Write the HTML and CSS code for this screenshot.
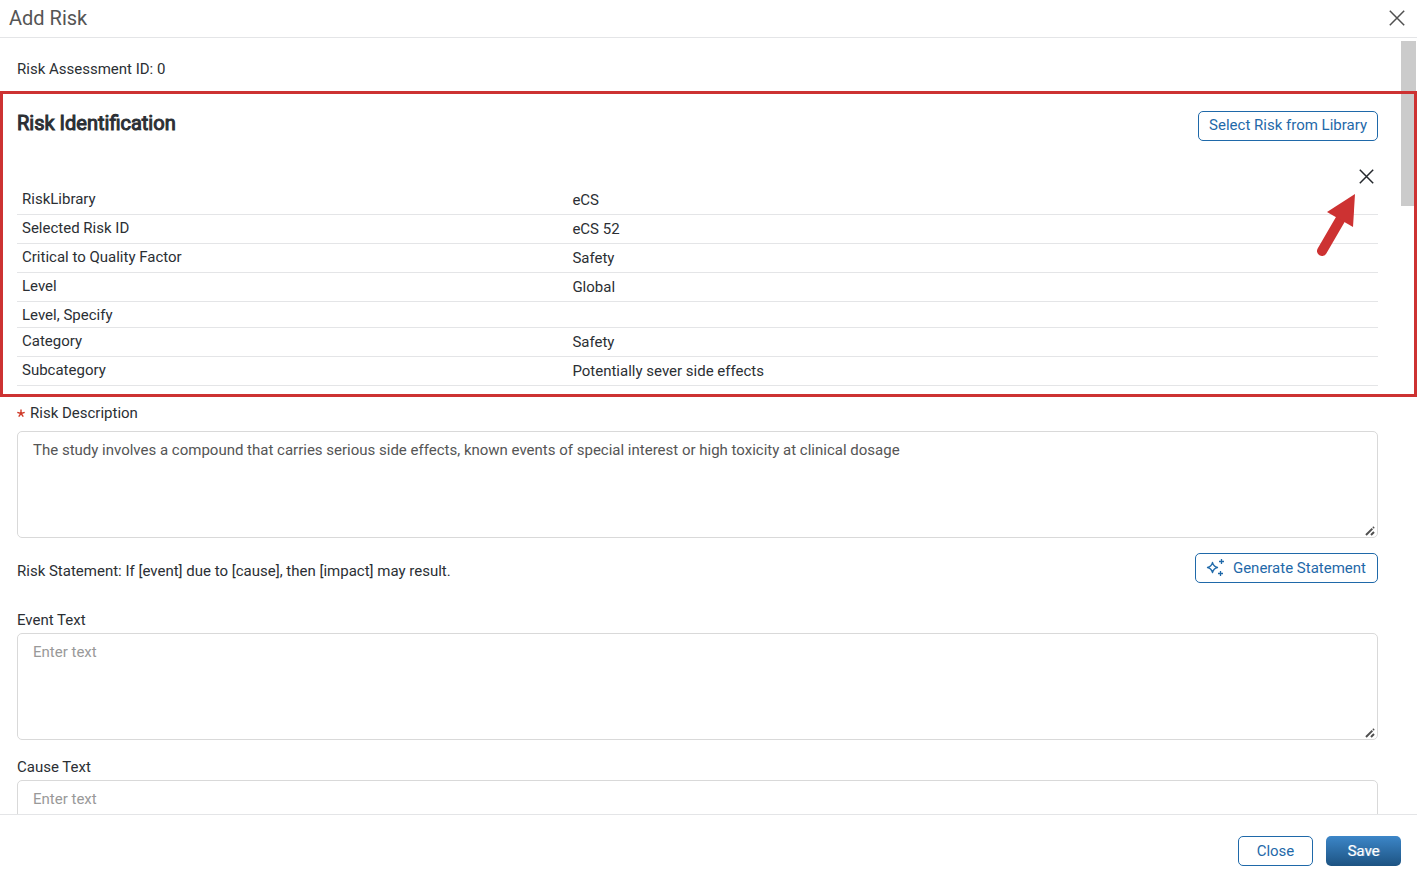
FILE: index.html
```html
<!DOCTYPE html>
<html lang="en">
<head>
<meta charset="utf-8">
<title>Add Risk</title>
<link rel="stylesheet" href="styles.css">
</head>
<body>
<div class="dialog" role="dialog" aria-labelledby="dialog-title">
  <header class="dialog-header">
    <h1 class="dialog-title" id="dialog-title">Add Risk</h1>
    <button class="icon-button" type="button" aria-label="Close dialog">
      <svg width="16" height="16" viewBox="0 0 16 16"><path d="M.8.8 15.2 15.2M15.2.8.8 15.2"/></svg>
    </button>
  </header>

  <div class="dialog-body">
    <main class="content">
      <p class="assessment-id">Risk Assessment ID: 0</p>

      <section class="identification">
        <div class="section-head">
          <h2 class="section-title">Risk Identification</h2>
          <button class="button button-library" type="button">Select Risk from Library</button>
        </div>
        <div class="clear-row">
          <button class="icon-button icon-button-dark" type="button" aria-label="Clear selected risk">
            <svg width="15" height="15" viewBox="0 0 15 15"><path d="M.8.8 14.2 14.2M14.2.8.8 14.2"/></svg>
          </button>
        </div>
        <table class="details">
          <tbody>
            <tr><th scope="row">RiskLibrary</th><td>eCS</td></tr>
            <tr><th scope="row">Selected Risk ID</th><td>eCS 52</td></tr>
            <tr><th scope="row">Critical to Quality Factor</th><td>Safety</td></tr>
            <tr><th scope="row">Level</th><td>Global</td></tr>
            <tr><th scope="row">Level, Specify</th><td class="empty"></td></tr>
            <tr><th scope="row">Category</th><td>Safety</td></tr>
            <tr><th scope="row">Subcategory</th><td>Potentially sever side effects</td></tr>
          </tbody>
        </table>
      </section>

      <div class="field field-description">
        <label class="label" for="description"><svg class="required" width="8" height="9" viewBox="0 0 8 9" role="img" aria-label="required"><path d="M4 4.500V.5M4 4.500.3 3.300M4 4.500 7.700 3.300M4 4.500 1.700 7.700M4 4.500 6.300 7.700"/></svg>Risk Description</label>
        <textarea class="textarea" id="description">The study involves a compound that carries serious side effects, known events of special interest or high toxicity at clinical dosage</textarea>
      </div>

      <div class="statement">
        <p class="statement-text">Risk Statement: If [event] due to [cause], then [impact] may result.</p>
        <button class="button" type="button">
          <svg class="sparkle" width="18" height="18" viewBox="0 0 18 18"><path d="M6.500 3.500Q7.500 7.500 11.500 8.500Q7.500 9.500 6.500 13.500Q5.500 9.500 1.500 8.500Q5.500 7.500 6.500 3.500ZM15.500 0v5M13 2.500h5M14.500 12v5M12 14.500h5"/></svg>
          Generate Statement
        </button>
      </div>

      <div class="field">
        <label class="label" for="event">Event Text</label>
        <textarea class="textarea" id="event" placeholder="Enter text"></textarea>
      </div>
      <div class="field">
        <label class="label" for="cause">Cause Text</label>
        <textarea class="textarea" id="cause" placeholder="Enter text"></textarea>
      </div>
    </main>
    <div class="scroll-track" aria-hidden="true"><div class="scroll-thumb"></div></div>

    <div class="highlight" aria-hidden="true"></div>
    <svg class="arrow" width="42" height="66" viewBox="0 0 42 66" aria-hidden="true">
      <path class="arrow-shaft" d="M8 59 26 28"/>
      <path class="arrow-head" d="M41 2 39 35 13 20Z"/>
    </svg>
  </div>

  <footer class="dialog-footer">
    <button class="button button-wide" type="button">Close</button>
    <button class="button button-wide button-primary" type="button">Save</button>
  </footer>
</div>
</body>
</html>
```
FILE: styles.css
```css
* {
  box-sizing: border-box;
}

body {
  margin: 0;
  background: #fff;
  color: #2b2f34;
  font: 15px/20px Roboto, "Liberation Sans", sans-serif;
}

h1, h2, p {
  margin: 0;
}

.dialog {
  display: flex;
  flex-direction: column;
  height: 100vh;
}

.dialog-header {
  display: flex;
  justify-content: space-between;
  align-items: center;
  padding: 6px 12px 7px 9px;
  border-bottom: 1px solid #e4e5e7;
}

.dialog-title {
  color: #555;
  font-size: 20px;
  font-weight: 400;
  line-height: 24px;
}

.icon-button {
  display: flex;
  padding: 0;
  border: 0;
  background: none;
  color: #505050;
  cursor: pointer;
}

.icon-button-dark {
  color: #24282d;
}

.icon-button path {
  fill: none;
  stroke: currentColor;
  stroke-width: 1.5;
}

.dialog-body {
  position: relative;
  display: flex;
  flex: 1;
  min-height: 0;
  overflow: hidden;
}

.content {
  flex: 1;
  padding: 21px 23px 0 17px;
}

.scroll-track {
  width: 16px;
  padding: 3px 1px 0 0;
}

.scroll-thumb {
  height: 165px;
  background: #cbcbcb;
}

.section-head {
  display: flex;
  justify-content: space-between;
  align-items: flex-start;
  margin-top: 32px;
}

.section-title {
  font-size: 20px;
  font-weight: 400;
  line-height: 24px;
  -webkit-text-stroke: 1px currentColor;
}

.button {
  display: flex;
  align-items: center;
  justify-content: center;
  gap: 9px;
  padding: 4px 11px 4px 10px;
  border: 1px solid #1f69a9;
  border-radius: 5px;
  background: #fff;
  color: #1f69a9;
  font: inherit;
  cursor: pointer;
}

.button-library {
  padding: 3px 10px 5px;
}

.sparkle {
  fill: none;
  stroke: currentColor;
  stroke-width: 1.3;
  stroke-linejoin: round;
}

.clear-row {
  display: flex;
  justify-content: flex-end;
  padding: 28px 4px 2px;
}

.details {
  width: 100%;
  border-collapse: separate;
  border-spacing: 0;
  table-layout: fixed;
}

.details th,
.details td {
  border-bottom: 1px solid #e4e5e7;
  text-align: left;
  vertical-align: top;
}

.details th {
  width: 40%;
  padding: 3px 5px 2px;
  font-weight: 400;
}

.details td {
  padding: 4px 11px;
}

.details .empty {
  padding: 0;
}

.field {
  display: flex;
  flex-direction: column;
  gap: 3px;
  margin-bottom: 17px;
}

.field-description {
  gap: 8px;
  margin: 17px 0 15px;
}

.required {
  margin-right: 5px;
  fill: none;
  stroke: #cf3a28;
  stroke-width: 1.4;
}

.textarea {
  display: block;
  width: 100%;
  height: 107px;
  padding: 8px 15px;
  border: 1px solid #d9d9d9;
  border-radius: 5px;
  background: #fff;
  color: #555;
  font: inherit;
  resize: vertical;
}

.textarea::placeholder {
  color: #999;
}

.textarea::-webkit-resizer {
  background: url("data:image/svg+xml,%3Csvg xmlns='http://www.w3.org/2000/svg' width='15' height='15'%3E%3Cpath d='M4 13l8-8M9 13l3-3' stroke='%23505050' stroke-width='2' stroke-dasharray='9 1'/%3E%3C/svg%3E") right bottom no-repeat;
}

.statement {
  display: flex;
  align-items: center;
  justify-content: space-between;
  margin-bottom: 27px;
}

.statement-text {
  padding-top: 5px;
}

.highlight {
  position: absolute;
  top: 53px;
  left: 0;
  right: 0;
  height: 306px;
  border: 3px solid #cd3232;
}

.arrow {
  position: absolute;
  top: 154px;
  right: 61px;
}

.arrow-shaft {
  stroke: #cd3232;
  stroke-width: 10;
  stroke-linecap: round;
}

.arrow-head {
  fill: #cd3232;
}

.dialog-footer {
  display: flex;
  justify-content: flex-end;
  gap: 13px;
  padding: 21px 16px 13px;
  border-top: 1px solid #e4e5e7;
}

.button-wide {
  width: 75px;
  padding: 4px 10px;
}

.button-primary {
  border: 0;
  padding: 5px 11px;
  background: linear-gradient(#3c86c8, #1d5382);
  color: #fff;
  text-shadow: 1px 0 0 rgba(255, 255, 255, 0.4);
}
```
